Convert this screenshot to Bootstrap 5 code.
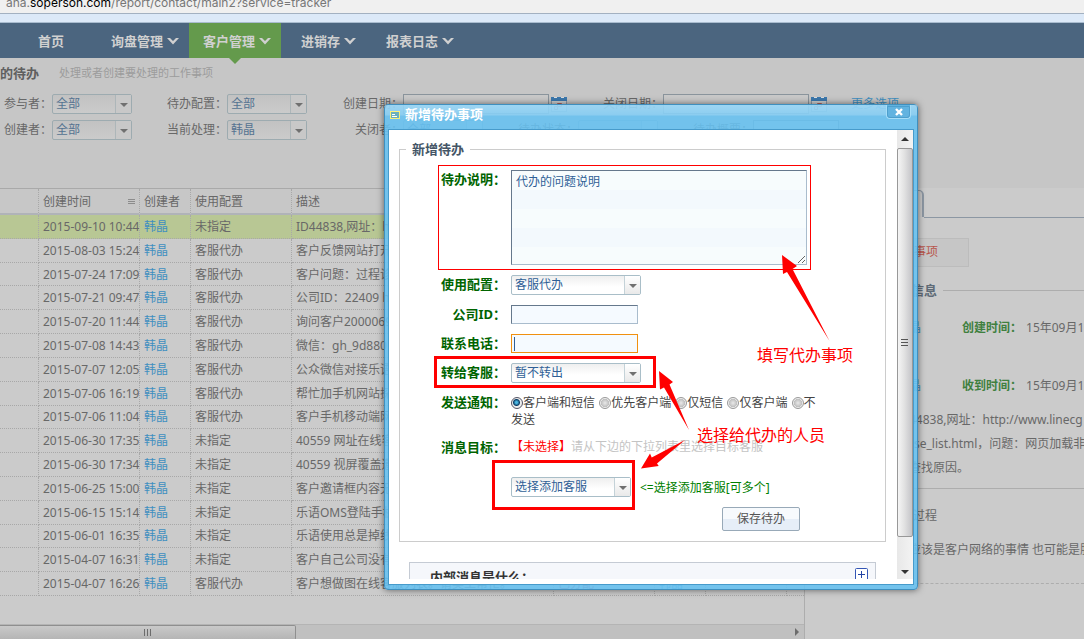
<!DOCTYPE html>
<html lang="zh-CN">
<head>
<meta charset="utf-8">
<meta name="viewport" content="width=device-width, initial-scale=1">
<title>客户管理 - 我的待办</title>
<link rel="stylesheet" href="https://cdn.jsdelivr.net/npm/bootstrap@5.3.0/dist/css/bootstrap.min.css">
<script src="https://cdn.jsdelivr.net/npm/bootstrap@5.3.0/dist/js/bootstrap.bundle.min.js"></script>
<style>
body{font:12px/18px "Noto Sans","Noto Sans CJK SC",sans-serif;color:#686868;background:#cbcbcb;overflow:hidden}
a{text-decoration:none;color:#3f8fc0}
.addr{height:14px;background:#f0f0f0;border-bottom:1px solid #a3b1c1;color:#777;font-family:Inter,sans-serif;line-height:18px;padding-left:6px;overflow:hidden}
.addr div{margin-top:-6px}
.addr b{color:#000;font-weight:400}
.strip{height:9px;background:#dce9f8;border-bottom:1px solid #a9bccf}
.topnav{height:35px;background:#4b657f;gap:6px;padding-left:24px}
.topnav a{color:#d0d0d0;font-size:13px;font-weight:700;height:35px;padding:0 10px 0 14px;gap:4px;display:flex;align-items:center}
.topnav .home{padding-right:27px}
.topnav .current{background:#649a4c;position:relative;margin-left:-6px}
.topnav .current::after{content:"";position:absolute;left:50%;top:100%;margin-left:-6px;border:6px solid transparent;border-top-color:#649a4c;border-bottom:0}
.filters{height:130px;background:#c6c6c6;padding-top:6px}
.filters h1{font-size:13px;line-height:18px;font-weight:700;color:#5f5f5f;margin:0 20px 0 0}
.filters small{font-size:11px;color:#9c9c9c}
.frow{height:20px;margin-bottom:6px}
.frow label{text-align:right;flex:none;width:96px}
.frow label:first-child{width:52px}
.frow .short{width:95px}
.date{width:146px;height:20px;border:1px solid #8a949c;background:#c9c9c9;margin-right:2px}
.memo{width:86px}
.pick{position:relative;display:inline-block;height:20px;flex:none}
.pick select{appearance:none;width:100%;height:20px;border:1px solid #a9bec8;border-radius:2px;background:linear-gradient(#efefef,#fff 60%);color:#2f5f96;font:inherit;line-height:16px;padding:0 3px;display:block}
.pick::after{content:"";position:absolute;right:1px;top:1px;width:16px;height:18px;border-left:1px solid #c4d2d8;background:linear-gradient(#fff,#e9e9e9);pointer-events:none}
.pick::before{content:"";position:absolute;z-index:1;right:4px;top:9px;border:4px solid transparent;border-top-color:#707070;border-bottom:0;pointer-events:none}
.dim{width:80px}
.dim select{background:linear-gradient(#c2c2c2,#cbcbcb);border-color:#9dabb0;color:#557391}
.dim::after{background:#c8c8c8;border-color:#adb6b9}
.work{height:calc(100vh - 188px)}
.grid-pane{min-width:0;border-right:1px solid #adadad}
.todo{table-layout:fixed;width:100%;height:408px;border-collapse:separate;border-spacing:0;border-top:1px solid #a9a9a9}
.todo th,.todo td{padding:1px 0 0 4px;white-space:nowrap;overflow:hidden;border-right:1px dotted #a8a8a8;border-bottom:1px dotted #a8a8a8;line-height:18px}
.todo th{height:26px;font-weight:400;background:#c7c7c7;border-bottom:2px solid #b0b3b8}
.todo th:last-child,.todo td:last-child{border-right:0}
.todo .picked td{background:#b8c794}
.red{color:#b0506c}
.hbar{height:15px;background:#c0c0c0;border-top:1px solid #b4b4b4}
.hthumb{width:296px;height:15px;border:1px solid #8f8f8f;border-left:0;background:linear-gradient(#c9c9c9,#b5b5b5);border-radius:0 2px 2px 0}
.info{width:279px;flex:none;overflow:hidden}
.tabend{height:27px;width:119px;border:solid #8c97a3;border-width:1px 2px 0 0;border-radius:0 5px 0 0;margin-top:2px;background:#c9c9c9}
.tabline{border-top:1px solid #8c97a3;margin-left:119px}
.subtab{width:164px;height:29px;margin-top:20px;border:1px solid #bcbcbc;background:#c6c6c6;color:#b8574d;text-align:right;padding:4px 30px 0 0}
.pad{padding-left:104px;white-space:nowrap}
.group{padding-top:14px}
.pad h2{font-size:13px;line-height:18px;font-weight:700;color:#5f6b77;margin:0 6px 0 2px}
.who{width:53px;flex:none}
.green{color:#3f803f;font-weight:700}
.para{line-height:24px;margin-top:13px}
.rule{border-top:1px solid #adadad}
.dash{border-top:1px dashed #adadad}
/* dialog */
.dlg{position:absolute;z-index:5;left:384px;top:104px;width:534px;border:1px solid #3f8fbe;border-radius:4px;background:rgba(103,193,241,.88);padding:0 3px 4px;box-shadow:0 0 7px rgba(0,0,0,.55);color:#444}
.dlg-head{height:24px;margin:0 -3px;padding:0 5px;background:linear-gradient(rgba(255,255,255,.3),rgba(255,255,255,.18) 10px,transparent 11px);color:#fff;font-size:13px;font-weight:700;gap:5px}
.dlg-head span{line-height:18px}
.shut{width:25px;height:14px;padding:0;border:1px solid #a7def8;border-top:0;border-radius:0 0 4px 4px;background:#62b3e0;outline:1px solid #4d9fcd;outline-offset:-2px;display:flex;align-items:center;justify-content:center;margin-right:1px}
.dlg-body{border:1px solid #479bcb;background:#fff;height:456px;padding-bottom:5px}
.view{flex:1;overflow:hidden;padding:10px 11px 0 10px;min-width:0}
fieldset{border:1px solid #ccc;padding:0 0 10px}
fieldset.form{display:block}
legend{float:none;width:auto;font-size:13px;line-height:18px;font-weight:700;color:#445566;margin:0 0 0 6px;padding:0 6px}
.fields{padding-top:12px;gap:10px}
.fl{width:106px;flex:none;text-align:right;font-size:13px;font-weight:700;color:#006400;line-height:19px}
.fr{gap:5px;line-height:17px}
.fr textarea{width:296px;height:95px;border:1px solid #a9bccd;border-top-color:#65788c;border-left-color:#65788c;background:repeating-linear-gradient(#f7fcfd 0 19px,#f3f9fd 19px 38px);color:#2f5f96;font:inherit;padding:2px 4px;display:block;outline:0}
.fr input[type=text]{width:127px;height:19px;border:1px solid #a9bccd;border-top-color:#65788c;border-left-color:#65788c;background:#f5faff;padding:0 3px;font:inherit;color:#2f5f96;outline:0}
.fr input.hot{border-color:#f09010;background:linear-gradient(#2f5f96,#2f5f96) 2px 2px/1px 14px no-repeat #f5faff}
.w130{width:130px}.w120{width:120px}
.radios{width:313px;padding-top:1px}
.radios label{margin-right:1px}
.radios input{appearance:none;width:12px;height:12px;margin:0;border:1px solid #999;border-radius:50%;vertical-align:-2px;background:radial-gradient(#e9e9e9,#bbb 60%,#eee 61%)}
.radios input:checked{border-color:#556;background:radial-gradient(circle at 45% 45%,#49b5e0 0 1px,#0c3f68 3px,#eee 4px)}
.adder{margin-top:10px}
.save{width:78px;height:24px;border:1px solid #98a9b8;border-radius:2px;background:linear-gradient(#f7fafd 50%,#e6eef8 50%);color:#555;font:inherit;padding:0;margin-left:322px}
.nextbox{margin:20px 10px 0;height:40px;border:1px solid #c5cbd4;background:#f5f7fb;font-size:13px;font-weight:700;color:#333;padding:5px 7px 0 20px}
.vbar{width:16px;background:linear-gradient(90deg,#e8e8e8,#f3f3f3);flex:none}
.vbar svg{display:block}
.vthumb{height:389px;border:1px solid #989898;border-radius:2px;background:linear-gradient(90deg,#f5f5f5,#e2e2e2 45%,#c4c4c8)}
.notes{position:absolute;left:-1px;top:-1px;pointer-events:none}
</style>
</head>
<body>
<div class="addr"><div>ana.<b>soperson.com</b>/report/contact/main2?service=tracker</div></div>
<div class="strip"></div>
<nav class="topnav d-flex">
  <a href="#" class="home">首页</a>
  <a href="#">询盘管理<svg width="12" height="8"><path d="M0 1h3l3 3 3-3h3L6 7.500z" fill="#d0d0d0"/></svg></a>
  <a href="#" class="current">客户管理<svg width="12" height="8"><path d="M0 1h3l3 3 3-3h3L6 7.500z" fill="#d0d0d0"/></svg></a>
  <a href="#">进销存<svg width="12" height="8"><path d="M0 1h3l3 3 3-3h3L6 7.500z" fill="#d0d0d0"/></svg></a>
  <a href="#">报表日志<svg width="12" height="8"><path d="M0 1h3l3 3 3-3h3L6 7.500z" fill="#d0d0d0"/></svg></a>
</nav>
<section class="filters">
  <div class="d-flex mb-2 pb-1 align-items-center"><h1>的待办</h1><small>处理或者创建要处理的工作事项</small></div>
  <div class="frow d-flex align-items-center">
    <label for="f1">参与者：</label><span class="pick dim"><select id="f1"><option>全部</option></select></span>
    <label for="f2" class="short">待办配置：</label><span class="pick dim"><select id="f2"><option>全部</option></select></span>
    <label for="f3">创建日期：</label><input id="f3" type="text" class="date">
    <svg width="16" height="16"><rect x=".5" y="1.500" width="15" height="14" fill="#cfcfcf" stroke="#8f9aa8"/><path d="M0 1h16v4H0z" fill="#3c78ad"/><path d="M3 1h3v1H3zM10 1h3v1h-3z" fill="#ddd"/><path d="M3.500 13.500v-3h3v3zM6.500 10.500v-3h4v3z" fill="none" stroke="#b3605c"/></svg>
    <label for="f4">关闭日期：</label><input id="f4" type="text" class="date">
    <svg width="16" height="16"><rect x=".5" y="1.500" width="15" height="14" fill="#cfcfcf" stroke="#8f9aa8"/><path d="M0 1h16v4H0z" fill="#3c78ad"/><path d="M3 1h3v1H3zM10 1h3v1h-3z" fill="#ddd"/><path d="M3.500 13.500v-3h3v3zM6.500 10.500v-3h4v3z" fill="none" stroke="#b3605c"/></svg>
    <a href="#" class="ms-4">更多选项</a>
  </div>
  <div class="frow d-flex align-items-center">
    <label for="g1">创建者：</label><span class="pick dim"><select id="g1"><option>全部</option></select></span>
    <label for="g2" class="short">当前处理：</label><span class="pick dim"><select id="g2"><option>韩晶</option></select></span>
    <label for="g3">关闭者：</label><span class="pick dim"><select id="g3"><option>全部</option></select></span>
    <label for="g4" class="short">待办状态：</label><span class="pick dim"><select id="g4"><option></option></select></span>
    <label for="g5" class="short">待办概要：</label><input id="g5" type="text" class="date memo">
  </div>
</section>
<main class="work d-flex">
  <div class="grid-pane flex-grow-1 d-flex flex-column">
    <table class="todo">
      <colgroup><col style="width:39px"><col style="width:101px"><col style="width:51px"><col style="width:101px"><col style="width:262px"><col style="width:101px"><col style="width:51px"><col style="width:81px"><col></colgroup>
      <thead><tr><th></th><th><div class="d-flex justify-content-between align-items-center pe-1">创建时间<svg width="7" height="7"><path d="M0 1.500h7M0 3.500h7M0 5.500h7" stroke="#8c8c8c" stroke-width="1"/></svg></div></th><th>创建者</th><th>使用配置</th><th>描述</th><th></th><th></th><th></th><th></th></tr></thead>
      <tbody>
      <tr class="picked"><td></td><td>2015-09-10 10:44</td><td><a href="#">韩晶</a></td><td>未指定</td><td>ID44838,网址：http</td><td></td><td></td><td></td><td></td></tr>
      <tr><td></td><td>2015-08-03 15:24</td><td><a href="#">韩晶</a></td><td>客服代办</td><td>客户反馈网站打开</td><td></td><td></td><td></td><td></td></tr>
      <tr><td></td><td>2015-07-24 17:09</td><td><a href="#">韩晶</a></td><td>客服代办</td><td>客户问题：过程诊</td><td></td><td></td><td></td><td></td></tr>
      <tr><td></td><td>2015-07-21 09:47</td><td><a href="#">韩晶</a></td><td>客服代办</td><td>公司ID：22409 http</td><td></td><td></td><td></td><td></td></tr>
      <tr><td></td><td>2015-07-20 11:44</td><td><a href="#">韩晶</a></td><td>客服代办</td><td>询问客户2000069</td><td></td><td></td><td></td><td></td></tr>
      <tr><td></td><td>2015-07-08 14:43</td><td><a href="#">韩晶</a></td><td>客服代办</td><td>微信：gh_9d880</td><td></td><td></td><td></td><td></td></tr>
      <tr><td></td><td>2015-07-07 12:05</td><td><a href="#">韩晶</a></td><td>客服代办</td><td>公众微信对接乐语</td><td></td><td></td><td></td><td></td></tr>
      <tr><td></td><td>2015-07-06 16:19</td><td><a href="#">韩晶</a></td><td>客服代办</td><td>帮忙加手机网站探</td><td></td><td></td><td></td><td></td></tr>
      <tr><td></td><td>2015-07-06 11:04</td><td><a href="#">韩晶</a></td><td>客服代办</td><td>客户手机移动端网</td><td></td><td></td><td></td><td></td></tr>
      <tr><td></td><td>2015-06-30 17:35</td><td><a href="#">韩晶</a></td><td>未指定</td><td>40559 网址在线客</td><td></td><td></td><td></td><td></td></tr>
      <tr><td></td><td>2015-06-30 17:34</td><td><a href="#">韩晶</a></td><td>未指定</td><td>40559 视屏覆盖邀</td><td></td><td></td><td></td><td></td></tr>
      <tr><td></td><td>2015-06-25 15:00</td><td><a href="#">韩晶</a></td><td>未指定</td><td>客户邀请框内容无</td><td></td><td></td><td></td><td></td></tr>
      <tr><td></td><td>2015-06-15 15:14</td><td><a href="#">韩晶</a></td><td>未指定</td><td>乐语OMS登陆手机</td><td></td><td></td><td></td><td></td></tr>
      <tr><td></td><td>2015-06-01 16:35</td><td><a href="#">韩晶</a></td><td>未指定</td><td>乐语使用总是掉线</td><td></td><td></td><td></td><td></td></tr>
      <tr><td></td><td>2015-04-07 16:31</td><td><a href="#">韩晶</a></td><td>未指定</td><td>客户自己公司没有</td><td></td><td></td><td></td><td></td></tr>
      <tr><td></td><td>2015-04-07 16:26</td><td><a href="#">韩晶</a></td><td>客服代办</td><td>客户想做图在线客服列表。请吴工帮忙。</td><td class="red">已分配</td><td><a href="#">韩晶</a></td><td></td><td></td></tr>
      </tbody>
    </table>
    <div class="hbar mt-auto d-flex justify-content-between align-items-center">
      <div class="hthumb d-flex justify-content-center align-items-center"><svg width="9" height="7"><path d="M1.500 0v7M4.500 0v7M7.500 0v7" stroke="#6c6c6c"/></svg></div>
      <svg width="12" height="8"><path d="M3 0l4 4-4 4z" fill="#6c6c6c"/></svg>
    </div>
  </div>
  <aside class="info">
    <div class="tabend"></div><div class="tabline"></div>
    <div class="subtab">事项</div>
    <div class="pad group d-flex align-items-center mb-3 pb-1"><h2>信息</h2><div class="rule flex-grow-1"></div></div>
    <div class="pad d-flex mb-4"><a href="#" class="who">晶</a><span class="green">创建时间：</span><span class="ps-1">15年09月10日</span></div>
    <div class="pad d-flex pt-3"><a href="#" class="who">晶</a><span class="green">收到时间：</span><span class="ps-1">15年09月10日</span></div>
    <div class="pad para">44838,网址：http://www.linecg<br>rse_list.html，问题：网页加载非<br>查找原因。</div>
    <div class="rule mt-2 pb-1"></div>
    <div class="pad group"><div class="ps-1">过程</div></div>
    <div class="pad pt-3">应该是客户网络的事情 也可能是服</div>
    <div class="dash mt-4"></div>
  </aside>
</main>

<section class="dlg" role="dialog" aria-label="新增待办事项">
  <div class="dlg-head d-flex align-items-start">
    <svg class="mt-1" width="10" height="11"><rect x=".5" y="2.500" width="9" height="7" fill="#6ab0bd" stroke="#f5ef7c"/><path d="M0 2.500h10" stroke="#fff27a"/><path d="M2 5.500h3M2 7.500h5" stroke="#fff"/></svg>
    <span>新增待办事项</span>
    <button class="shut ms-auto" type="button" aria-label="关闭"><svg width="8" height="8"><path d="M1 1l6 6M7 1L1 7" stroke="#fff" stroke-width="2.400"/></svg></button>
  </div>
  <div class="dlg-body d-flex">
    <div class="view">
      <fieldset class="form"><legend>新增待办</legend>
        <form class="fields d-flex flex-column">
          <div class="fr d-flex"><label class="fl" for="d1">待办说明：</label><textarea id="d1">代办的问题说明</textarea></div>
          <div class="fr d-flex"><label class="fl" for="d2">使用配置：</label><span class="pick w130"><select id="d2"><option>客服代办</option></select></span></div>
          <div class="fr d-flex"><label class="fl" for="d3">公司ID：</label><input id="d3" type="text"></div>
          <div class="fr d-flex"><label class="fl" for="d4">联系电话：</label><input id="d4" type="text" class="hot"></div>
          <div class="fr d-flex"><label class="fl" for="d5">转给客服：</label><span class="pick w130"><select id="d5"><option>暂不转出</option></select></span></div>
          <div class="fr d-flex"><span class="fl">发送通知：</span><div class="radios"><label><input type="radio" name="n" checked>客户端和短信</label> <label><input type="radio" name="n">优先客户端</label> <label><input type="radio" name="n">仅短信</label> <label><input type="radio" name="n">仅客户端</label> <label class="d-inline"><input type="radio" name="n">不发送</label></div></div>
          <div class="fr d-flex"><span class="fl">消息目标：</span><div style="color:#c4c4c4"><span style="color:red">【未选择】</span>请从下边的下拉列表里选择目标客服</div></div>
          <div class="fr adder d-flex align-items-center"><span class="fl"></span><span class="pick w120"><select aria-label="选择添加客服"><option>选择添加客服</option></select></span><span class="ms-1" style="color:#008000">&lt;=选择添加客服[可多个]</span></div>
          <button class="save" type="button">保存待办</button>
        </form>
      </fieldset>
      <div class="nextbox d-flex justify-content-between"><span>内部消息是什么：</span><svg width="13" height="13"><rect x=".5" y=".5" width="12" height="12" rx="1" fill="#fff" stroke="#3355b5"/><path d="M3 6.500h7M6.500 3v7" stroke="#2244a5"/></svg></div>
    </div>
    <div class="vbar d-flex flex-column">
      <svg width="16" height="18"><path d="M4 11l4-4 4 4z" fill="#333"/></svg>
      <div class="vthumb d-flex justify-content-center align-items-center"><svg width="8" height="9"><path d="M0 1.500h7M0 4.500h7M0 7.500h7" stroke="#555"/></svg></div>
      <svg class="mt-auto" width="16" height="16"><path d="M4 7l4 4 4-4z" fill="#333"/></svg>
    </div>
  </div>
  <svg class="notes" width="534" height="486" viewBox="384 104 534 486" fill="red" font-size="16">
    <rect x="438.500" y="165.500" width="372" height="104" fill="none" stroke="red"/>
    <rect x="435.500" y="357.500" width="219" height="29" fill="none" stroke="red" stroke-width="3"/>
    <rect x="493.500" y="461.500" width="140" height="47" fill="none" stroke="red" stroke-width="3"/>
    <path d="M782 255l15 11-4.500 3 37 72-42.500-69-4 2zM659 371l14 11-3.500 2.500L689 430l-25-42.500-4 2zM641 468.500l9-15 1.700 4L685 440l-28 23.500 1.700 2.500z"/>
    <text x="757" y="361">填写代办事项</text>
    <text x="697" y="441">选择给代办的人员</text>
  </svg>
</section>
</body>
</html>
